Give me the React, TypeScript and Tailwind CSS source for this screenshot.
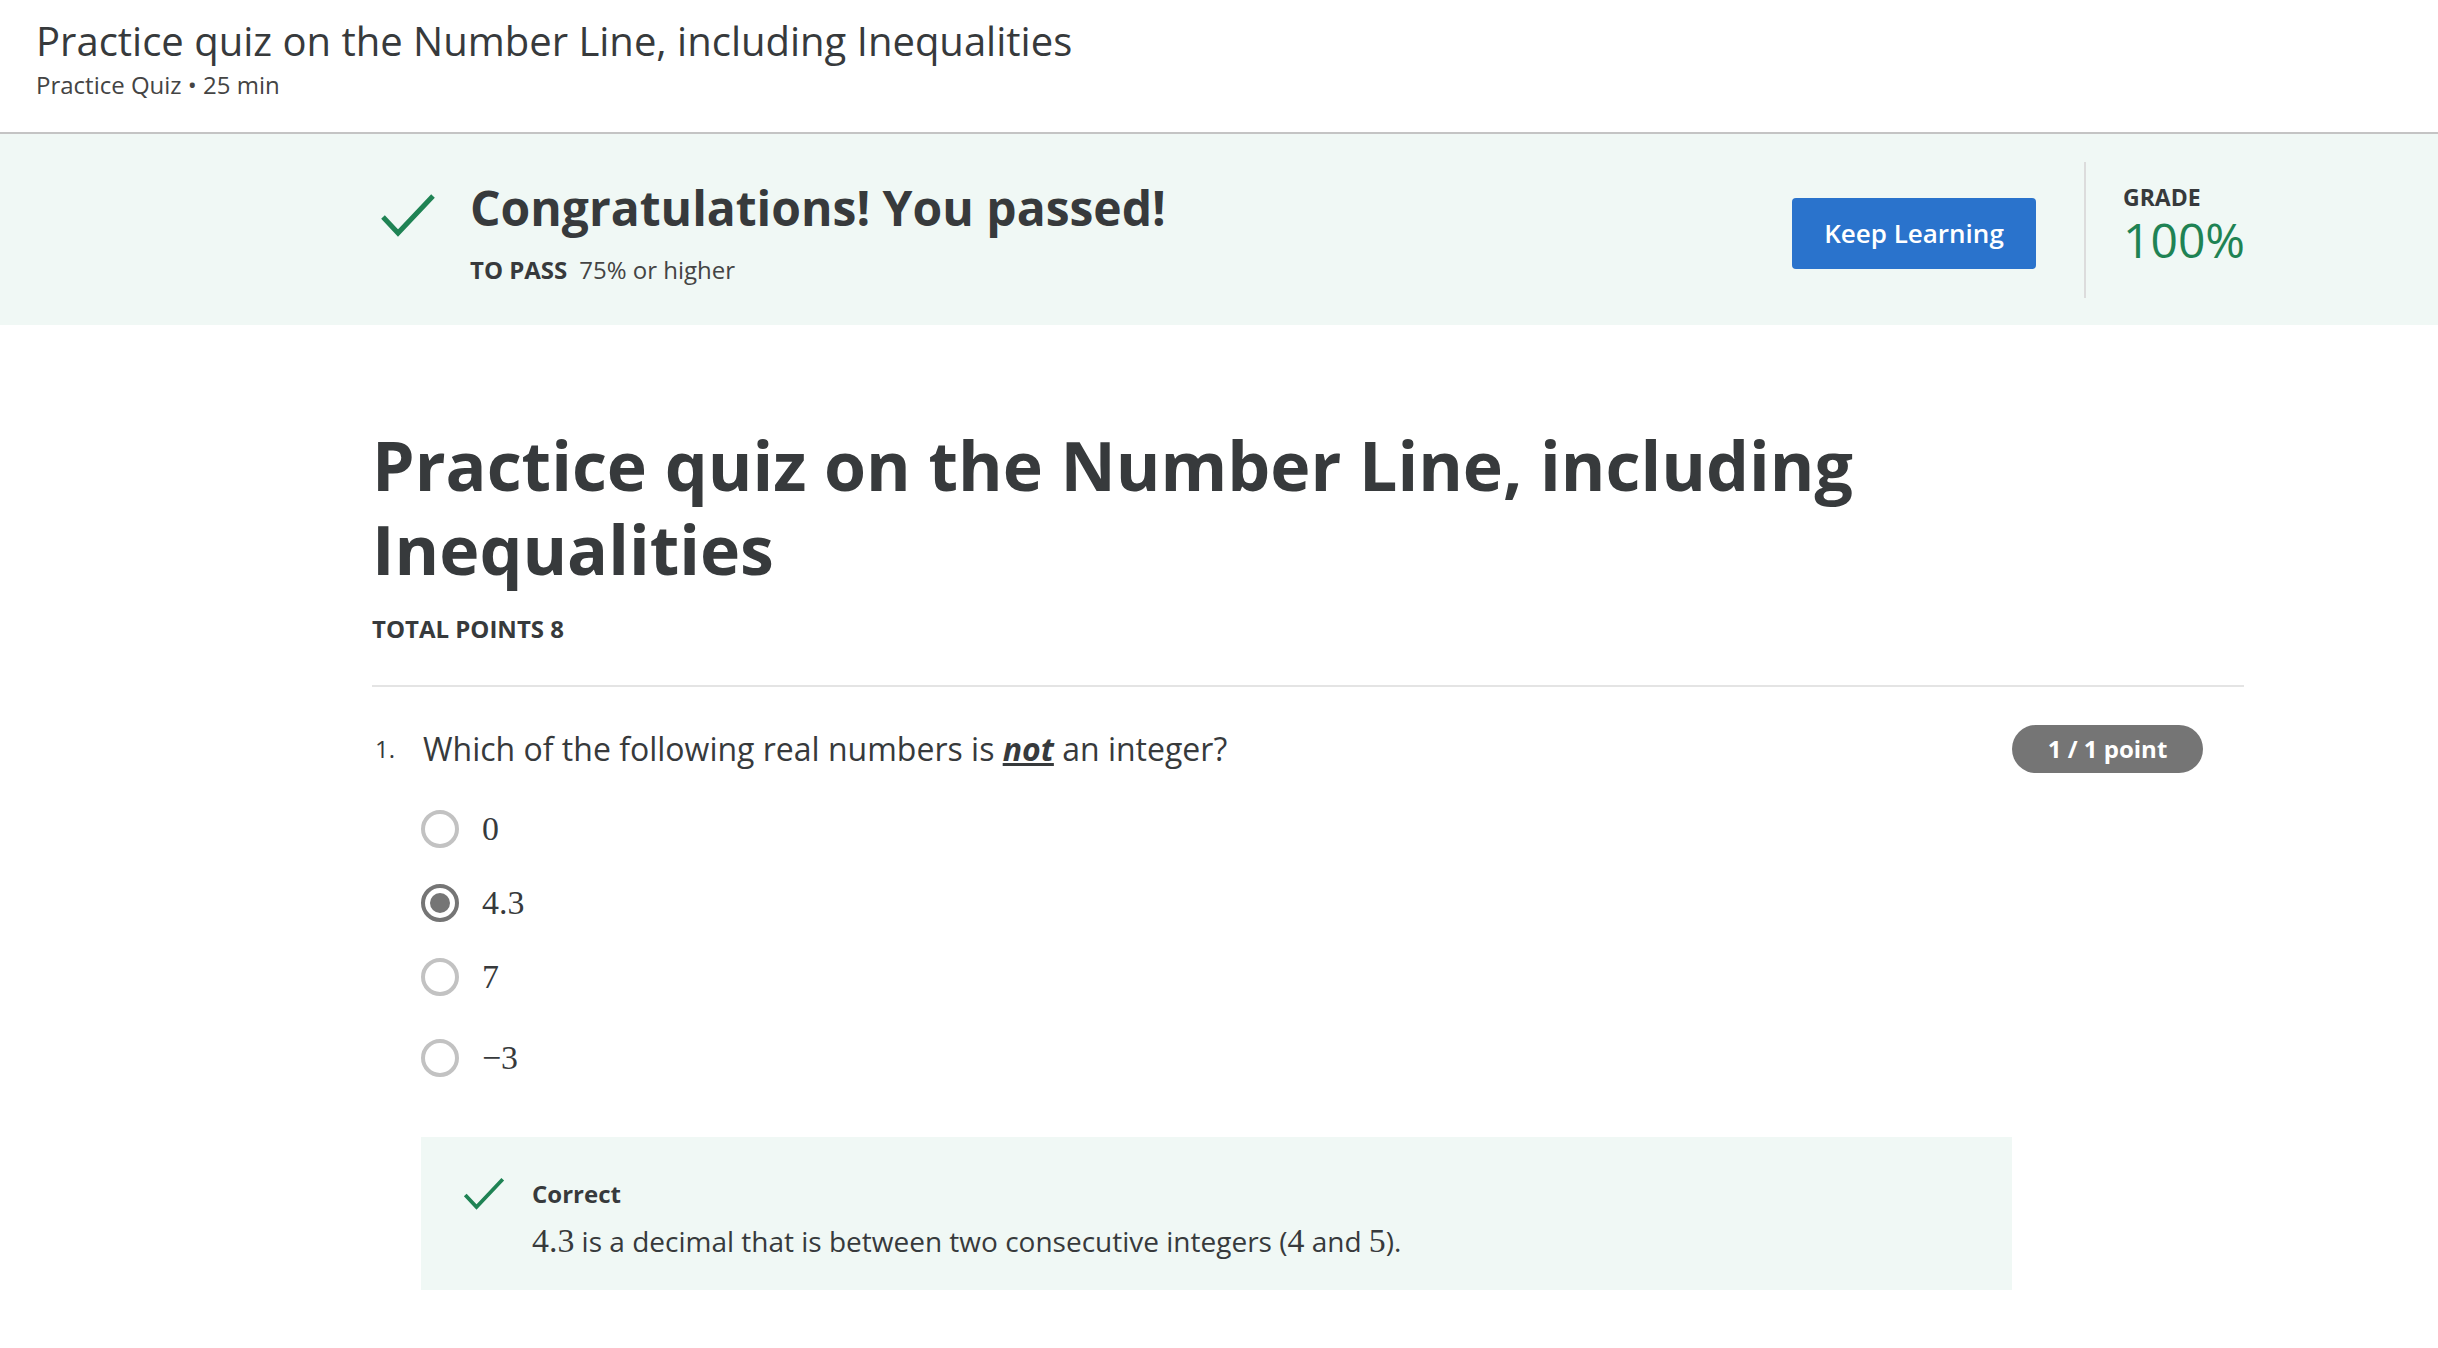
import React from 'react';

const options = [
  { label: '0', selected: false },
  { label: '4.3', selected: true },
  { label: '7', selected: false },
  { label: '\u22123', selected: false },
];

const Check: React.FC<{ className?: string }> = ({ className }) => (
  <svg className={className} viewBox="0 0 56 44" fill="none">
    <polyline points="3,24 18,40 53,3" stroke="#1f8354" strokeWidth="5" />
  </svg>
);

const Math: React.FC<{ children: React.ReactNode }> = ({ children }) => (
  <span className="font-['Liberation_Serif',serif] text-[1.21em]">{children}</span>
);

export default function App() {
  return (
    <div className="min-h-screen bg-white text-[#373a3c] font-['Open_Sans',sans-serif]">
      {/* top header */}
      <header className="px-[36px] pt-[17px] pb-[32px] border-b-2 border-[#c4c4c4]">
        <h1 className="text-[40px] leading-[48px]">Practice quiz on the Number Line, including Inequalities</h1>
        <p className="mt-[5px] text-[24px] leading-[30px] text-[#444]">Practice Quiz • 25 min</p>
      </header>

      {/* result band */}
      <div className="h-[191px] bg-[#f0f8f5] flex items-center">
        <div className="ml-[372px] w-[1872px] flex items-center">
          <div className="flex-1 flex items-start mt-[5px]">
            <Check className="ml-[8px] mt-[13px] w-[56px] h-[44px]" />
            <div className="ml-[34px]">
              <div className="text-[48px] leading-[56px] font-bold">Congratulations! You passed!</div>
              <div className="mt-[19px] text-[24px] leading-[30px]">
                <span className="font-bold mr-[12px]">TO PASS</span>
                <span className="text-[#444]">75% or higher</span>
              </div>
            </div>
          </div>
          <button className="mt-[8px] w-[244px] h-[71px] rounded-[4px] bg-[#2a73cc] text-white text-[26px] font-semibold">
            Keep Learning
          </button>
          <div className="ml-[48px] w-[2px] h-[136px] bg-[#dcdcdc]" />
          <div className="ml-[37px] w-[121px] mb-[8px]">
            <div className="text-[23px] leading-[28px] font-bold">GRADE</div>
            <div className="text-[48px] leading-[58px] text-[#1f8354]">100%</div>
          </div>
        </div>
      </div>

      {/* quiz body */}
      <main className="ml-[372px] w-[1872px] pt-[98px]">
        <h2 className="max-w-[1700px] text-[68px] leading-[84px] font-bold">
          Practice quiz on the Number Line, including Inequalities
        </h2>
        <div className="mt-[23px] text-[24px] leading-[30px] font-bold">TOTAL POINTS 8</div>
        <div className="mt-[41px] h-[2px] bg-[#e4e4e4]" />

        <div className="mt-[38px] flex items-center justify-between">
          <div className="flex items-start">
            <div className="pl-[3px] w-[51px] text-[24px] leading-[44px]">1.</div>
            <div className="text-[32px] leading-[44px]">
              Which of the following real numbers is{' '}
              <span className="font-bold italic underline">not</span> an integer?
            </div>
          </div>
          <div className="mr-[41px] w-[191px] h-[48px] rounded-full bg-[#757575] text-white text-[24px] font-bold flex items-center justify-center">
            1 / 1 point
          </div>
        </div>

        <div className="mt-[19px] pl-[49px]">
          {options.map((o, i) => (
            <div key={o.label} className={`h-[74px] flex items-center ${i === 3 ? 'mt-[7px]' : ''}`}>
              {o.selected ? (
                <div className="w-[38px] h-[38px] rounded-full border-[4px] border-[#757575] flex items-center justify-center">
                  <div className="w-[20px] h-[20px] rounded-full bg-[#757575]" />
                </div>
              ) : (
                <div className="w-[38px] h-[38px] rounded-full border-[4px] border-[#c2c2c2]" />
              )}
              <span className="ml-[23px] text-[28px]">
                <Math>{o.label}</Math>
              </span>
            </div>
          ))}
        </div>

        <div className="mt-[42px] ml-[49px] w-[1591px] h-[153px] bg-[#f0f8f5] pt-[40px] pl-[42px] flex items-start">
          <Check className="w-[42px] h-[33px]" />
          <div className="ml-[27px] mt-[3px]">
            <div className="text-[24px] leading-[28px] font-bold">Correct</div>
            <div className="mt-[15px] text-[28px] leading-[36px]">
              <Math>4.3</Math> is a decimal that is between two consecutive integers (<Math>4</Math> and <Math>5</Math>).
            </div>
          </div>
        </div>
      </main>
    </div>
  );
}
